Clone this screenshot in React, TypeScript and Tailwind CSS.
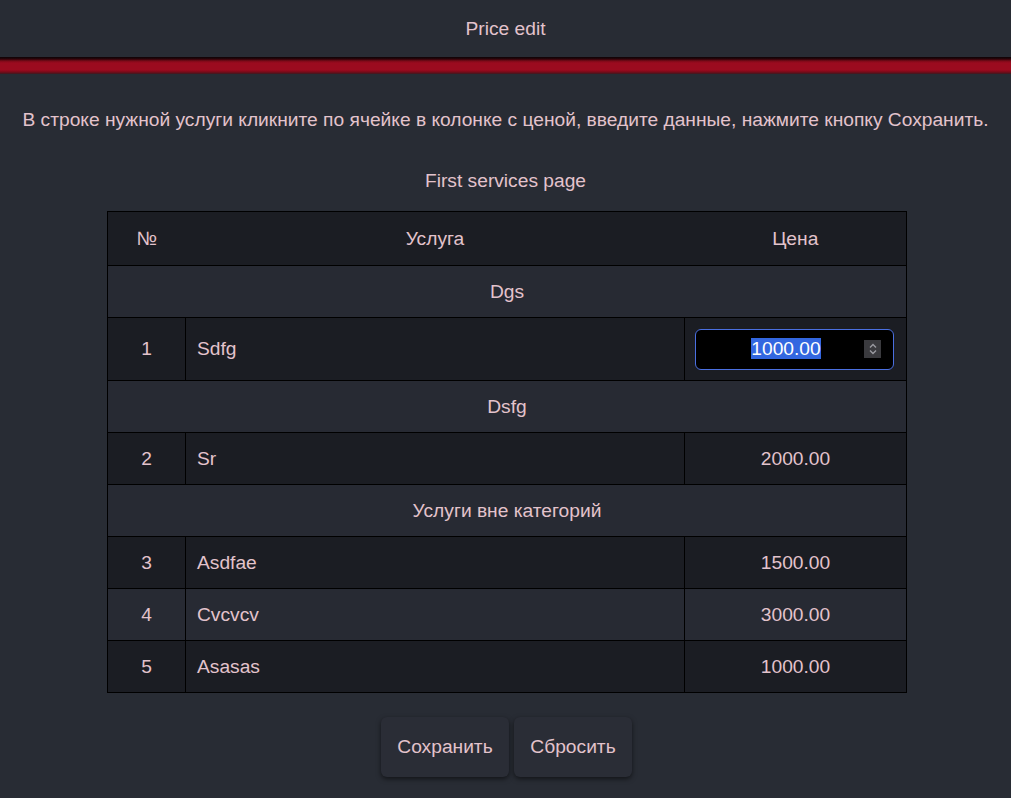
import React from "react";

type Row = { n: number; name: string; price: string };
type Group = { title: string; rows: Row[] };

const groups: Group[] = [
  { title: "Dgs", rows: [{ n: 1, name: "Sdfg", price: "1000.00" }] },
  { title: "Dsfg", rows: [{ n: 2, name: "Sr", price: "2000.00" }] },
  {
    title: "Услуги вне категорий",
    rows: [
      { n: 3, name: "Asdfae", price: "1500.00" },
      { n: 4, name: "Cvcvcv", price: "3000.00" },
      { n: 5, name: "Asasas", price: "1000.00" },
    ],
  },
];

function PriceInput({ value }: { value: string }) {
  return (
    <div className="ml-[10px] mr-[12px] flex h-[41px] items-center rounded-[6px] border border-[#4a6fe0] bg-black pl-[12px] pr-[12px]">
      <span className="flex-1 text-center">
        <span className="bg-[#3367e0] text-white">{value}</span>
      </span>
      <span className="flex h-[18px] w-[17px] items-center justify-center bg-[#3a3a3e]">
        <svg width="10" height="14" viewBox="0 0 10 14" fill="none" stroke="#9a9aa0" strokeWidth="1.4">
          <path d="M2 5.5 L5 2.5 L8 5.5" />
          <path d="M2 8.5 L5 11.5 L8 8.5" />
        </svg>
      </span>
    </div>
  );
}

export default function App() {
  return (
    <div className="min-h-[798px] bg-[#282c34] font-['Liberation_Sans',Arial,sans-serif] text-[19.2px] leading-[22px] text-[#e3c3cc]">
      <header className="flex h-[57px] items-center justify-center bg-[#282c34]">
        Price edit
      </header>
      <div className="h-[17px] bg-[linear-gradient(to_bottom,#0d0406_0px,#2a0509_2px,#7d0a18_4px,#9b0b1f_6px,#9b0b1f_13px,#7a0a19_15px,#3a1a20_17px)]" />

      <p className="mt-[35px] text-center">
        В строке нужной услуги кликните по ячейке в колонке с ценой, введите данные, нажмите кнопку Сохранить.
      </p>
      <h2 className="mt-[39px] text-center">First services page</h2>

      <div className="mt-[19px] flex justify-center pl-[3px]">
        <table className="w-[800px] border-collapse border border-black">
          <thead>
            <tr className="h-[54px] bg-[#1b1d23]">
              <th className="w-[78px] font-normal">№</th>
              <th className="font-normal">Услуга</th>
              <th className="w-[222px] font-normal">Цена</th>
            </tr>
          </thead>
          <tbody>
            {groups.map((g) => (
              <React.Fragment key={g.title}>
                <tr className="h-[52px] border-t border-black bg-[#272a33]">
                  <td colSpan={3} className="text-center">
                    {g.title}
                  </td>
                </tr>
                {g.rows.map((r) => (
                  <tr
                    key={r.n}
                    className={
                      (r.n === 1 ? "h-[63px] " : "h-[52px] ") +
                      "border-t border-black " +
                      (r.n === 4 ? "bg-[#272a33]" : "bg-[#1b1d23]")
                    }
                  >
                    <td className="border-r border-black text-center">{r.n}</td>
                    <td className="border-r border-black px-[11px]">{r.name}</td>
                    <td className="text-center">
                      {r.n === 1 ? <PriceInput value={r.price} /> : r.price}
                    </td>
                  </tr>
                ))}
              </React.Fragment>
            ))}
          </tbody>
        </table>
      </div>

      <div className="mt-[24px] flex justify-center gap-[5px] pb-[20px] pl-[2px]">
        <button className="h-[60px] w-[128px] rounded-[6px] bg-[#2a2d36] shadow-[0_2px_5px_rgba(0,0,0,0.55)]">
          Сохранить
        </button>
        <button className="h-[60px] w-[118px] rounded-[6px] bg-[#2a2d36] shadow-[0_2px_5px_rgba(0,0,0,0.55)]">
          Сбросить
        </button>
      </div>
    </div>
  );
}
